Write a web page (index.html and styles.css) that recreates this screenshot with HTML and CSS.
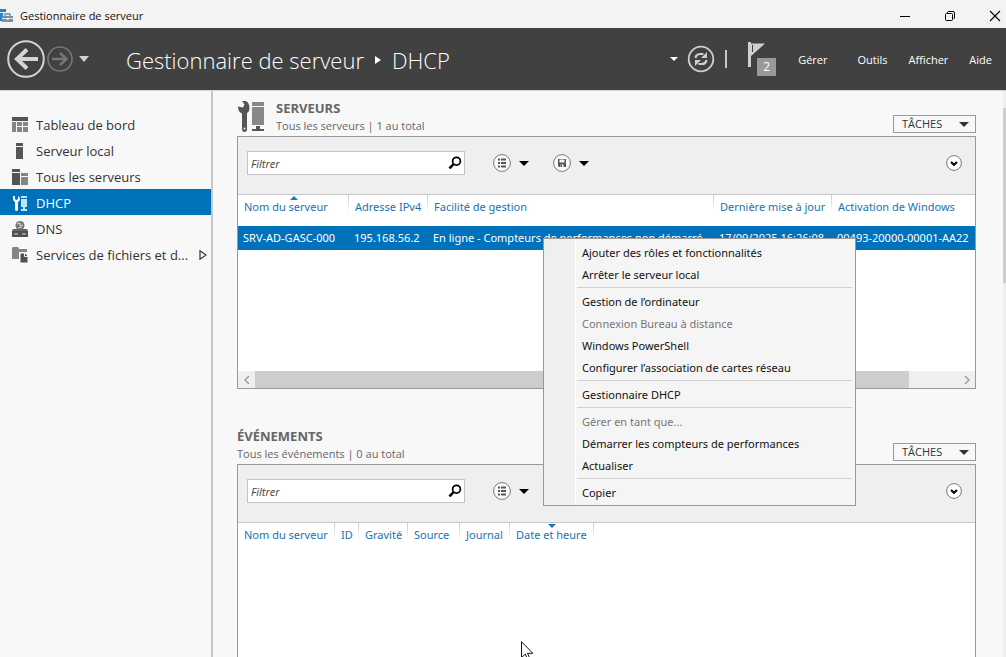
FILE: index.html
```html
<!DOCTYPE html>
<html lang="fr">
<head>
<meta charset="utf-8">
<title>Gestionnaire de serveur</title>
<link rel="stylesheet" href="styles.css">
</head>
<body>
<svg class="defs" width="0" height="0" aria-hidden="true">
  <symbol id="caret" viewBox="0 0 10 5"><path d="M0 0h10L5 5z" fill="currentColor"/></symbol>
  <symbol id="search" viewBox="0 0 14 14"><circle cx="8.5" cy="5.2" r="3.9" fill="none" stroke="#000" stroke-width="1.7"/><path d="M5.6 8.2L1.4 12.4" stroke="#000" stroke-width="2.5"/></symbol>
  <symbol id="list" viewBox="0 0 18 18"><circle cx="9" cy="9" r="8.4" fill="#fafafa" stroke="#777"/><path d="M5 5.5h2M5 9h2M5 12.5h2M8 5.5h5M8 9h5M8 12.5h5" stroke="#555" stroke-width="2"/></symbol>
  <symbol id="save" viewBox="0 0 18 18"><circle cx="9" cy="9" r="8.4" fill="#fafafa" stroke="#777"/><path d="M5 5h8v8H6l-1-1z" fill="#555"/><path d="M6.500 5.500h5v3h-5zM7.500 10.500h3V13h-3z" fill="#f4f4f4"/><path d="M8 11h1v2H8z" fill="#555"/></symbol>
  <symbol id="expand" viewBox="0 0 16 16"><circle cx="8" cy="8" r="7.400" fill="#fff" stroke="#777"/><path d="M5 7l3 2.800L11 7" fill="none" stroke="#000" stroke-width="2"/></symbol>
</svg>

<header class="titlebar">
  <svg class="app-icon" width="14" height="16" viewBox="0 0 14 16"><path d="M0 1h6v3H0zM0 5h3v8H0z" fill="#1d86cf"/><path d="M5 8V6h5v2" fill="none" stroke="#6f8ba0" stroke-width="1.300"/><path d="M2 8h11v6H2z" fill="#7791a5"/><path d="M2 10.500h11" stroke="#d5e2ec"/><path d="M7 10h1.500v2H7z" fill="#fff"/></svg>
  <span class="app-name">Gestionnaire de serveur</span>
  <button class="win-btn" aria-label="Réduire"><svg width="12" height="12" viewBox="0 0 12 12"><path d="M1 6.500h10" stroke="#000"/></svg></button>
  <button class="win-btn" aria-label="Restaurer"><svg width="12" height="12" viewBox="0 0 12 12" fill="none" stroke="#000"><rect x="1.500" y="3.500" width="7" height="7" rx="1"/><path d="M3.500 3V2.500q0-1 1-1H9q1.500 0 1.500 1.500v5q0 .5-1 .5"/></svg></button>
  <button class="win-btn close" aria-label="Fermer"><svg width="12" height="12" viewBox="0 0 12 12"><path d="M1 1l10 10M11 1L1 11" stroke="#000" stroke-width="1.100"/></svg></button>
</header>

<div class="banner">
  <div class="history">
    <button aria-label="Précédent"><svg width="38" height="38" viewBox="0 0 38 38" fill="none" stroke="#d4d4d4"><circle cx="19" cy="19" r="17.800" stroke-width="2"/><path d="M31 19H10" stroke-width="4"/><path d="M20 9.500L10 19l10 9.500" stroke-width="4"/></svg></button>
    <button aria-label="Suivant"><svg width="26" height="26" viewBox="0 0 26 26" fill="none" stroke="#777"><circle cx="13" cy="13" r="12" stroke-width="1.700"/><path d="M5 13h13" stroke-width="2.500"/><path d="M13 7l6.500 6-6.500 6" stroke-width="2.500"/></svg></button>
    <button class="history-more" aria-label="Historique"><svg width="10" height="6" viewBox="0 0 10 6"><path d="M0 0h10L5 6z" fill="currentColor"/></svg></button>
  </div>
  <h1 class="crumbs"><span>Gestionnaire de serveur</span><svg width="6" height="8" viewBox="0 0 6 8"><path d="M0 0l6 4-6 4z" fill="#fff"/></svg><span>DHCP</span></h1>
  <div class="actions">
    <button aria-label="Options d’actualisation"><svg width="8" height="4"><use href="#caret"/></svg></button>
    <button aria-label="Actualiser"><svg width="28" height="28" viewBox="0 0 28 28" fill="none" stroke="#cecece"><circle cx="14" cy="14" r="12.300" stroke-width="1.800"/><path d="M8.500 13q.5-4 5-4h3M19.500 15q-.5 4-5 4h-3" stroke-width="2.200"/><path d="M20 7v6h-6zM8 21v-6h6z" fill="#cecece" stroke="none"/></svg></button>
    <span class="divider"></span>
    <button class="flag" aria-label="Notifications"><svg width="18" height="26" viewBox="0 0 18 26"><path d="M0 0h3v25H0zM3 1.500h14L3 14z" fill="#cfcfcf"/><path d="M4.500 3v7" stroke="#414141"/></svg><span class="badge">2</span></button>
    <nav class="menus">
      <button class="manage">Gérer</button><button>Outils</button><button>Afficher</button><button>Aide</button>
    </nav>
  </div>
</div>

<div class="workspace">
  <nav class="sidebar">
    <a href="#"><svg width="16" height="16" viewBox="0 0 16 16"><path d="M0 0h16v4H0z" fill="#555"/><path d="M0 5h4v10H0zM5 5h5v4H5zM11 5h5v4h-5zM5 10h5v5H5zM11 10h5v5h-5z" fill="#858585"/></svg><span>Tableau de bord</span></a>
    <a href="#"><svg width="16" height="16" viewBox="0 0 16 16"><path d="M4 0h7v3H4zM4 4h7v12H4z" fill="#555"/></svg><span>Serveur local</span></a>
    <a href="#"><svg width="16" height="16" viewBox="0 0 16 16"><path d="M0 0h8v3H0zM0 4h8v12H0z" fill="#555"/><path d="M9 4h7v3H9zM9 8h7v8H9z" fill="#858585"/></svg><span>Tous les serveurs</span></a>
    <a href="#" class="selected" aria-current="page"><svg width="16" height="16" viewBox="0 0 16 16"><path d="M1 1v3q0 2 2 3v7q0 2 1.500 2T6 14V7q2-1 2-3 0-2-2-3v3L4.500 5 3 4V1z" fill="#fff"/><path d="M9 1h6v2H9zM9 4h6v8H9zM11 12h2v2h2v2H9v-2h2z" fill="#bde7fa"/></svg><span>DHCP</span></a>
    <a href="#"><svg width="16" height="16" viewBox="0 0 16 16"><circle cx="8" cy="4.500" r="4.500" fill="#777"/><path d="M5 3l3-1v3l3-1M6 7l3-1 1 1" fill="none" stroke="#ddd"/><path d="M1 8h14l1 2H0z" fill="#666"/><path d="M0 10h16v6H0z" fill="#505050"/><path d="M2 13h4M10 13h4" stroke="#ddd"/></svg><span>DNS</span></a>
    <a href="#"><svg width="16" height="16" viewBox="0 0 16 16"><path d="M0 1l1-1h5l1 2h8v3H0zM0 5h7v7H0z" fill="#858585"/><path d="M8 6h5l3 3v7H8z" fill="#505050" stroke="#f7f7f7"/><path d="M12.500 6v3.500H16" fill="none" stroke="#eee"/></svg><span>Services de fichiers et d...</span><svg class="more" width="8" height="10" viewBox="0 0 8 10"><path d="M1 .8v8.400L7 5z" fill="none" stroke="#333" stroke-width="1.200"/></svg></a>
  </nav>

  <main class="content">
    <section class="tile">
      <div class="tile-head">
        <svg class="tile-icon" width="28" height="32" viewBox="0 0 28 32"><path d="M5 1L7.500 4.500 6 7.500 1 6.500Q1 12 5 13.500V29q0 3 2.500 3t2.500-3V13q2.500-1 2.500-5 0-5-3.500-7z" fill="#555"/><circle cx="7.500" cy="28.500" r="1" fill="#eee"/><path d="M15 2h12v4H15zM15 7h12v18H15z" fill="#888"/><path d="M19 26h4v3h4v2H15v-2h4z" fill="#555"/></svg>
        <div class="tile-title"><h2>SERVEURS</h2><p>Tous les serveurs | 1 au total</p></div>
        <button class="tasks">TÂCHES<svg width="10" height="5"><use href="#caret"/></svg></button>
      </div>
      <div class="panel servers">
        <div class="filterbar">
          <label class="filter"><input type="text" placeholder="Filtrer" aria-label="Filtrer les serveurs"><svg width="14" height="14"><use href="#search"/></svg></label>
          <button class="tool" aria-label="Critères"><svg width="18" height="18"><use href="#list"/></svg><svg width="10" height="5"><use href="#caret"/></svg></button>
          <button class="tool" aria-label="Enregistrer"><svg width="18" height="18"><use href="#save"/></svg><svg width="10" height="5"><use href="#caret"/></svg></button>
          <button class="expand" aria-label="Développer"><svg width="16" height="16"><use href="#expand"/></svg></button>
        </div>
        <table class="grid">
          <colgroup><col class="c-name"><col class="c-ip"><col class="c-status"><col class="c-update"><col></colgroup>
          <thead><tr><th>Nom du serveur<svg class="sort" width="8" height="4" viewBox="0 0 8 4"><path d="M0 4h8L4 0z" fill="#1778bd"/></svg></th><th>Adresse IPv4</th><th>Facilité de gestion</th><th>Dernière mise à jour</th><th>Activation de Windows</th></tr></thead>
          <tbody><tr><td>SRV-AD-GASC-000</td><td>195.168.56.2</td><td>En ligne - Compteurs de performances non démarré</td><td>17/09/2025 16:26:08</td><td>00493-20000-00001-AA22</td></tr></tbody>
        </table>
        <div class="hscroll">
          <button aria-label="Défiler à gauche"><svg width="6" height="8" viewBox="0 0 6 8"><path d="M5 0L1 4l4 4" fill="none" stroke="#999" stroke-width="1.400"/></svg></button>
          <div class="track"><div class="thumb"></div></div>
          <button aria-label="Défiler à droite"><svg width="6" height="8" viewBox="0 0 6 8"><path d="M1 0l4 4-4 4" fill="none" stroke="#999" stroke-width="1.400"/></svg></button>
        </div>
      </div>
    </section>

    <section class="tile events-tile">
      <div class="tile-head">
        <div class="tile-title"><h2>ÉVÉNEMENTS</h2><p>Tous les événements | 0 au total</p></div>
        <button class="tasks">TÂCHES<svg width="10" height="5"><use href="#caret"/></svg></button>
      </div>
      <div class="panel events">
        <div class="filterbar">
          <label class="filter"><input type="text" placeholder="Filtrer" aria-label="Filtrer les événements"><svg width="14" height="14"><use href="#search"/></svg></label>
          <button class="tool" aria-label="Critères"><svg width="18" height="18"><use href="#list"/></svg><svg width="10" height="5"><use href="#caret"/></svg></button>
          <button class="expand" aria-label="Développer"><svg width="16" height="16"><use href="#expand"/></svg></button>
        </div>
        <table class="grid">
          <colgroup><col class="e-name"><col class="e-id"><col class="e-severity"><col class="e-source"><col class="e-log"><col class="e-date"><col></colgroup>
          <thead><tr><th>Nom du serveur</th><th>ID</th><th>Gravité</th><th>Source</th><th>Journal</th><th>Date et heure<svg class="sort" width="8" height="4" viewBox="0 0 8 4"><path d="M0 0h8L4 4z" fill="#1778bd"/></svg></th><th></th></tr></thead>
        </table>
      </div>
    </section>
  </main>
  <div class="vscroll"><div class="vthumb"></div></div>
</div>

<div class="context-menu" role="menu">
  <button role="menuitem">Ajouter des rôles et fonctionnalités</button>
  <button role="menuitem">Arrêter le serveur local</button>
  <hr>
  <button role="menuitem">Gestion de l’ordinateur</button>
  <button role="menuitem" disabled>Connexion Bureau à distance</button>
  <button role="menuitem">Windows PowerShell</button>
  <button role="menuitem">Configurer l’association de cartes réseau</button>
  <hr>
  <button role="menuitem">Gestionnaire DHCP</button>
  <hr>
  <button role="menuitem" disabled>Gérer en tant que...</button>
  <button role="menuitem">Démarrer les compteurs de performances</button>
  <button role="menuitem">Actualiser</button>
  <hr>
  <button role="menuitem">Copier</button>
</div>
<svg class="pointer" width="13" height="20" viewBox="0 0 13 20"><path d="M.5.7v16l3.800-3.600 2.400 5.500 2.200-1-2.400-5.300h5.300z" fill="#fff" stroke="#111"/></svg>
</body>
</html>
```
FILE: styles.css
```css
* { box-sizing: border-box; }
body {
  margin: 0;
  height: 100vh;
  overflow: hidden;
  display: flex;
  flex-direction: column;
  position: relative;
  background: #f8f8f8;
  color: #222;
  font: 12px/16px "Open Sans", "Noto Sans", sans-serif;
}
button { margin: 0; padding: 0; border: 0; background: none; color: inherit; font: inherit; }
svg { display: block; flex: none; }
.defs { position: absolute; }

.titlebar { flex: none; height: 28px; display: flex; align-items: center; background: #f3f3f3; color: #111; font-size: 11px; padding-top: 4px; }
.app-name { margin-left: 6px; flex: 1; }
.win-btn { width: 45px; height: 24px; display: grid; place-items: center; }
.win-btn.close { width: 46px; margin-right: -12px; }

.banner { flex: none; height: 63px; display: flex; align-items: center; background: #414141; color: #fff; border-bottom: 1px solid #d4d4d4; }
.history { display: flex; align-items: center; padding-left: 7px; gap: 2px; color: #d0d0d0; width: 126px; }
.history-more { margin-left: 4px; }
.crumbs { margin: 0; display: flex; align-items: center; gap: 11px; font-size: 22px; line-height: 30px; font-weight: 300; white-space: nowrap; padding-top: 2px; }
.actions { margin-left: auto; display: flex; align-items: center; padding-right: 14px; }
.actions > button:first-child { margin-right: 9px; }
.divider { width: 2px; height: 18px; background: #c8c8c8; margin: 0 21px 0 10px; }
.flag { position: relative; width: 28px; height: 34px; margin-right: 22px; }
.flag svg { margin-bottom: 8px; }
.badge { position: absolute; right: 0; bottom: 0; width: 19px; height: 18px; background: #999; line-height: 18px; text-align: center; }
.menus { display: flex; gap: 21px; padding-top: 2px; font-size: 11px; }
.manage { margin-right: 9px; }

.workspace { flex: 1; min-height: 0; display: flex; }
.sidebar { flex: none; width: 213px; border-right: 2px solid #c8c8c8; padding-top: 20px; }
.sidebar a { display: flex; align-items: center; height: 26px; padding: 0 4px 0 12px; gap: 8px; color: #333; text-decoration: none; font-size: 13px; white-space: nowrap; padding-top: 1px; }
.sidebar .selected { margin-top: -1px; height: 27px; background: #0072bc; color: #fff; }
.sidebar .selected { margin-top: 0; height: 26px; }
.more { margin-left: auto; }

.content { flex: 1; min-width: 0; padding: 9px 27px 0 24px; display: flex; flex-direction: column; }
.tile-head { display: flex; height: 36px; }
.tile-icon { margin-right: 11px; }
.tile-title { flex: 1; color: #666; }
h2 { margin: 0; font-size: 13px; line-height: 16px; font-weight: 700; }
p { margin: 0; padding-top: 2px; font-size: 11px; line-height: 16px; }
.tasks { align-self: flex-end; width: 83px; height: 18px; margin-bottom: 3px; padding: 0 6px 0 8px; border: 1px solid #999; display: flex; align-items: center; justify-content: space-between; color: #333; font-size: 11px; line-height: 16px; }
.panel { background: #fff; border: 1px solid #999; display: flex; flex-direction: column; overflow: hidden; }
.servers { height: 253px; }
.events-tile { flex: 1; display: flex; flex-direction: column; margin-top: 39px; }
.events { flex: 1; border-bottom: 0; }
.filterbar { flex: none; height: 58px; display: flex; align-items: center; padding: 0 13px 5px 9px; background: #efefef; border-bottom: 1px solid #c8c8c8; }
.filter { width: 218px; height: 24px; margin-right: 28px; display: flex; align-items: center; background: #fff; border: 1px solid #c4c4c4; padding-right: 2px; }
.filter input { flex: 1; min-width: 0; border: 0; outline: 0; background: none; padding: 1px 3px 0; font: italic 11px/16px "Open Sans", "Noto Sans", sans-serif; }
.filter input::placeholder { color: #444; opacity: 1; }
.tool { display: flex; align-items: center; gap: 8px; margin-right: 24px; color: #000; }
.expand { margin-left: auto; }

.grid { width: 100%; table-layout: fixed; border-collapse: collapse; font-family: "Noto Sans", "Open Sans", sans-serif; font-size: 11px; }
.grid th { position: relative; height: 31px; padding: 4px 0 0 6px; vertical-align: top; text-align: left; font-weight: 400; color: #1b72b0; white-space: nowrap; background: linear-gradient(#ccc, #fff) right top / 1px 18px no-repeat; }
.grid th:last-child { background: none; }
.grid td { height: 24px; padding: 0 0 0 5px; background: #0072bc; color: #fff; white-space: nowrap; overflow: hidden; }
.sort { position: absolute; top: 1px; left: calc(50% - 4px); }
.c-name { width: 111px; }
.c-ip { width: 79px; }
.c-status { width: 286px; }
.c-update { width: 118px; }
.e-name { width: 97px; }
.e-id { width: 24px; }
.e-severity { width: 49px; }
.e-source { width: 52px; }
.e-log { width: 50px; }
.e-date { width: 84px; }

.hscroll { margin-top: auto; height: 17px; display: flex; background: #efefef; }
.hscroll button { width: 17px; display: grid; place-items: center; }
.track { flex: 1; }
.thumb { width: 93%; height: 100%; background: #cdcdcd; }
.vscroll { flex: none; width: 3px; background: #efefef; padding-top: 17px; }
.vthumb { height: 175px; background: #cdcdcd; }

.context-menu { position: absolute; left: 543px; top: 238px; width: 313px; padding: 3px 3px 1px 0; border: 1px solid #999; background: linear-gradient(90deg, #efefef 31px, #fff 31px, #fff 32px, #f5f5f5 32px); display: flex; flex-direction: column; color: #111; font-family: "Noto Sans", "Open Sans", sans-serif; }
.context-menu button { height: 22px; padding-left: 38px; text-align: left; font-size: 11px; }
.context-menu button:disabled { color: #777; }
.context-menu hr { margin: 1px 0 3px 33px; height: 1px; border: 0; background: #d2d2d2; }
.pointer { position: absolute; left: 521px; top: 641px; }
```
